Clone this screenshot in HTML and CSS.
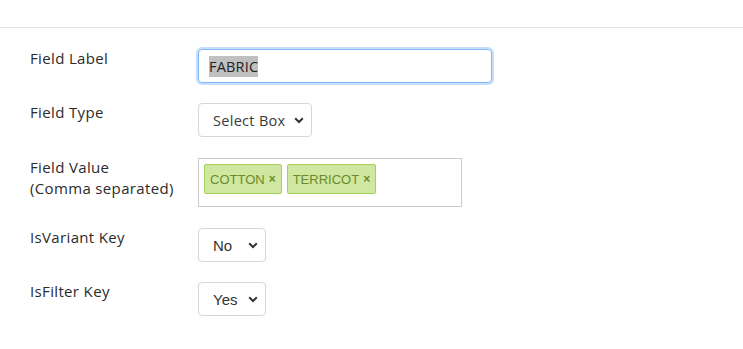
FILE: index.html
```html
<!DOCTYPE html>
<html>
<head>
<meta charset="utf-8">
<link rel="stylesheet" href="styles.css">
</head>
<body>
<div class="topbar"></div>
<form class="form">
  <div class="row">
    <label class="label">Field Label</label>
    <div class="control">
      <div class="input focused"><span class="sel">FABRIC</span></div>
    </div>
  </div>
  <div class="row">
    <label class="label">Field Type</label>
    <div class="control">
      <div class="select w-type"><span>Select Box</span><svg class="chev" width="10" height="7" viewBox="0 0 10 7"><path d="M1.2 1.3 L5 5 L8.8 1.3" fill="none" stroke="#333" stroke-width="2"/></svg></div>
    </div>
  </div>
  <div class="row row-tags">
    <label class="label">Field Value<br>(Comma separated)</label>
    <div class="control">
      <div class="tagbox">
        <span class="tag">COTTON <b>×</b></span>
        <span class="tag">TERRICOT <b>×</b></span>
      </div>
    </div>
  </div>
  <div class="row">
    <label class="label">IsVariant Key</label>
    <div class="control">
      <div class="select w-yn"><span class="yn">No</span><svg class="chev" width="10" height="7" viewBox="0 0 10 7"><path d="M1.2 1.3 L5 5 L8.8 1.3" fill="none" stroke="#333" stroke-width="2"/></svg></div>
    </div>
  </div>
  <div class="row">
    <label class="label">IsFilter Key</label>
    <div class="control">
      <div class="select w-yn"><span class="yn">Yes</span><svg class="chev" width="10" height="7" viewBox="0 0 10 7"><path d="M1.2 1.3 L5 5 L8.8 1.3" fill="none" stroke="#333" stroke-width="2"/></svg></div>
    </div>
  </div>
</form>
</body>
</html>
```
FILE: styles.css
```css
html, body {
  margin: 0;
  padding: 0;
  background: #fff;
}
body {
  font-family: "Open Sans", "Liberation Sans", sans-serif;
  color: #333;
}
.topbar {
  height: 27px;
  border-bottom: 1px solid #e3e3e3;
}
.form {
  padding: 21px 0 0 30px;
  display: flex;
  flex-direction: column;
  gap: 20px;
}
.row {
  display: grid;
  grid-template-columns: 168px auto;
  align-items: start;
  height: 34px;
}
.row-tags {
  height: 49px;
  margin: 1px 0;
}
.label {
  font-size: 15px;
  letter-spacing: 0.35px;
  font-weight: 500;
  line-height: 21px;
  color: #2b2b2b;
  margin-top: -1px;
}
.control {
  display: flex;
}
.input {
  box-sizing: border-box;
  width: 294px;
  height: 34px;
  border: 1px solid #80b6f4;
  border-radius: 4px;
  box-shadow: 0 0 0 2px #c6defb;
  padding: 0 10px;
  display: flex;
  align-items: center;
  font-size: 14.5px;
  letter-spacing: 0.2px;
  color: #222;
}
.sel {
  background: #c0c0c0;
  line-height: 21px;
}
.select {
  box-sizing: border-box;
  height: 34px;
  border: 1px solid #d6d6d6;
  border-radius: 4px;
  display: flex;
  align-items: center;
  justify-content: space-between;
  padding: 0 7px 0 14px;
  font-size: 14.5px;
  letter-spacing: 0.3px;
  color: #3a3a3a;
}
.w-type { width: 114px; }
.w-yn { width: 68px; }
.yn {
  font-family: "Liberation Sans", Arial, sans-serif;
  font-size: 15px;
  letter-spacing: 0;
  color: #333;
}
.tagbox {
  box-sizing: border-box;
  width: 264px;
  height: 49px;
  border: 1px solid #cccccc;
  padding: 5px 5px;
  display: flex;
  align-items: flex-start;
  gap: 5px;
}
.tag {
  box-sizing: border-box;
  height: 30px;
  display: inline-flex;
  align-items: center;
  gap: 4px;
  padding: 0 5px;
  background: #cfe7a0;
  border: 1px solid #a6d05a;
  border-radius: 2px;
  color: #6b8b2b;
  font-family: "Liberation Sans", Arial, sans-serif;
  font-size: 13px;
}
.tag b {
  font-size: 12px;
  font-weight: bold;
}
```
